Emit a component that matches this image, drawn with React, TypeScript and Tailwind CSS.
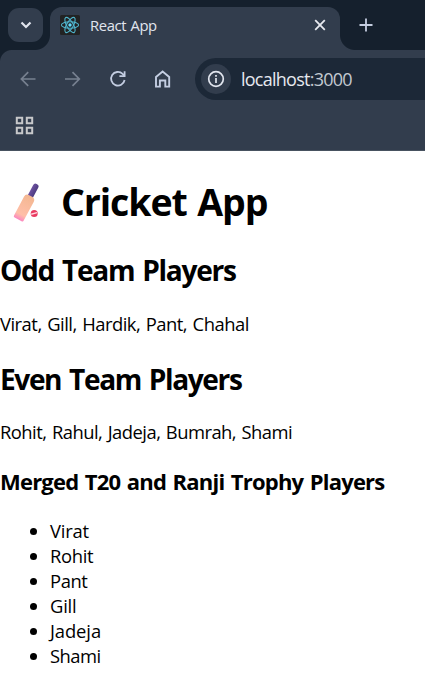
const listPlayers = [
  { name: "Virat", tracking: "tracking-[-0.2px]" },
  { name: "Rohit", tracking: "tracking-[-0.35px]" },
  { name: "Pant", tracking: "tracking-[-0.4px]" },
  { name: "Gill", tracking: "tracking-[-0.2px]" },
  { name: "Jadeja", tracking: "tracking-[-0.1px]" },
  { name: "Shami", tracking: "tracking-[-0.5px]" },
];

function ReactLogo() {
  return (
    <svg width="20" height="20" viewBox="0 0 20 20" className="shrink-0">
      <rect width="20" height="20" rx="1.5" fill="#222323" />
      <g fill="none" stroke="#4fb5cc" strokeWidth="1.1">
        <ellipse cx="10" cy="10" rx="8.6" ry="3.3" />
        <ellipse cx="10" cy="10" rx="8.6" ry="3.3" transform="rotate(60 10 10)" />
        <ellipse cx="10" cy="10" rx="8.6" ry="3.3" transform="rotate(120 10 10)" />
      </g>
      <circle cx="10" cy="10" r="1.7" fill="#61dafb" />
    </svg>
  );
}

function CricketBat() {
  return (
    <svg width="50" height="50" viewBox="0 0 50 50" className="shrink-0">
      <defs>
        <linearGradient id="blade" x1="0.5" y1="0" x2="0.5" y2="1">
          <stop offset="0" stopColor="#f3b791" />
          <stop offset="0.78" stopColor="#ffbfa8" />
          <stop offset="1" stopColor="#fb86c0" />
        </linearGradient>
        <linearGradient id="handle" x1="0" y1="0" x2="1" y2="0">
          <stop offset="0" stopColor="#6d51a0" />
          <stop offset="1" stopColor="#4d3c80" />
        </linearGradient>
      </defs>
      <g transform="translate(0 1) rotate(28 27.6 23.6)">
        <rect x="24.7" y="3.8" width="5.8" height="17" rx="2.7" fill="url(#handle)" />
        <path d="M22.1 21Q22.1 17.6 25.4 17.2H29.8Q33.1 17.6 33.1 21V42.2Q33.1 43.8 31.5 43.8H23.7Q22.1 43.8 22.1 42.2Z" fill="url(#blade)" />
      </g>
      <circle cx="34.2" cy="36.6" r="3.5" fill="#e93b61" />
      <path d="M31.2 37.3L37 35.6" stroke="#ffd7df" strokeWidth="1.5" />
    </svg>
  );
}

export default function App() {
  return (
    <div className="h-[683px] w-[425px] overflow-hidden bg-white font-['Open_Sans','Noto_Sans',sans-serif] whitespace-nowrap text-black">
      <header className="h-[151px] border-b border-[#485260] bg-[#323d4d]">
        <div className="relative flex h-[50px] bg-[#15202d]">
          <div className="mt-2 ml-2 flex h-[34px] w-[35px] items-center justify-center rounded-[11px] bg-[#323d4d]">
            <svg width="12" height="8" viewBox="0 0 12 8" fill="none" stroke="#e1e5ee" strokeWidth="2.2">
              <path d="M1.5 1.5L6 6L10.5 1.5" />
            </svg>
          </div>
          <div className="relative mt-[7px] ml-[7px] flex h-[43px] w-[290px] items-center rounded-t-[12px] bg-[#323d4d] pr-[13px] pb-[7px] pl-[10px]">
            <span className="absolute bottom-0 -left-[15px] size-[15px] bg-[radial-gradient(circle_at_0_0,transparent_14.5px,#323d4d_15.5px)]" />
            <span className="absolute -right-[15px] bottom-0 size-[15px] bg-[radial-gradient(circle_at_100%_0,transparent_14.5px,#323d4d_15.5px)]" />
            <ReactLogo />
            <span className="ml-[10px] text-[14.8px] leading-5 tracking-[-0.4px] [word-spacing:1px] text-[#e1e5ee]">React App</span>
            <svg className="ml-auto" width="14" height="14" viewBox="0 0 14 14" fill="none" stroke="#e8eaf0" strokeWidth="1.8">
              <path d="M2.2 2.2L11.8 11.8M11.8 2.2L2.2 11.8" />
            </svg>
          </div>
          <svg className="mt-[18px] ml-[19px]" width="14" height="14" viewBox="0 0 14 14" fill="none" stroke="#c4cde0" strokeWidth="1.8">
            <path d="M7 0.5V13.5M0.5 7H13.5" />
          </svg>
        </div>
        <div className="flex h-[58px] items-center bg-[radial-gradient(circle_at_12px_12px,#323d4d_11.5px,#15202d_12.5px)] bg-[length:12px_12px] bg-no-repeat">
          <svg className="ml-5" width="16" height="16" viewBox="0 0 16 16" fill="none" stroke="#778190" strokeWidth="1.7">
            <path d="M15.5 8H1.5M8.2 1.2L1.4 8L8.2 14.8" />
          </svg>
          <svg className="ml-[29px]" width="16" height="16" viewBox="0 0 16 16" fill="none" stroke="#778190" strokeWidth="1.7">
            <path d="M0 8H14.2M7.5 1.2L14.3 8L7.5 14.8" />
          </svg>
          <svg className="ml-[28px]" width="18" height="18" viewBox="0 0 18 18" fill="none" stroke="#c4cee2" strokeWidth="1.8">
            <path d="M15.6 10A6.8 6.8 0 1 1 13.6 3.8L15.6 5.8" />
            <path d="M15.6 1.2V6.2H10.4" />
          </svg>
          <svg className="ml-[27px]" width="18" height="20" viewBox="0 0 18 20" fill="none" stroke="#c4cee2" strokeWidth="1.9">
            <path d="M2 8L8.6 2.6L15.2 8V17.6H11.3V11.5H5.9V17.6H2Z" />
          </svg>
          <div className="ml-[23px] flex h-[42px] flex-1 items-center rounded-l-full bg-[#1c2837] pl-[6px]">
            <div className="flex size-[30px] items-center justify-center rounded-full bg-[#323d4d]">
              <svg width="18" height="18" viewBox="0 0 18 18" fill="none" stroke="#e1e5ee" strokeWidth="1.7">
                <circle cx="9" cy="9" r="7.3" />
                <path d="M9 8V13M9 5V6.8" />
              </svg>
            </div>
            <span className="ml-[10px] text-[18px] leading-6 tracking-[-0.75px] text-[#e6e9ef]">
              localhost<span className="text-[#c3c8d0]">:3000</span>
            </span>
          </div>
        </div>
        <svg className="mt-2 ml-[15px]" width="20" height="20" viewBox="0 0 20 20" fill="none" stroke="#c7c8ca" strokeWidth="2">
          <path d="M1.8 1.8H7.2V7.2H1.8ZM11.8 1.8H17.2V7.2H11.8ZM1.8 11.8H7.2V17.2H1.8ZM11.8 11.8H17.2V17.2H11.8Z" />
        </svg>
      </header>
      <main>
        <h1 className="mt-[26px] flex h-[50px] items-center text-[37.5px] leading-[50px] font-bold tracking-[-1.1px] [word-spacing:2px]">
          <CricketBat />
          <span className="ml-[11px]">Cricket App</span>
        </h1>
        <h2 className="mt-[24px] text-[28.1px] leading-[38px] font-bold tracking-[-1.3px] [word-spacing:2px]">Odd Team Players</h2>
        <p className="mt-[22px] text-[18.4px] leading-[25px] tracking-[-0.5px] [word-spacing:1.2px]">Virat, Gill, Hardik, Pant, Chahal</p>
        <h2 className="mt-[24px] text-[28.1px] leading-[38px] font-bold tracking-[-1.4px] [word-spacing:2px]">Even Team Players</h2>
        <p className="mt-[21px] text-[18.4px] leading-[25px] tracking-[-0.53px] [word-spacing:1.2px]">Rohit, Rahul, Jadeja, Bumrah, Shami</p>
        <h3 className="mt-[22px] text-[22px] leading-[30px] font-bold tracking-[-0.8px] [word-spacing:1.6px]">Merged T20 and Ranji Trophy Players</h3>
        <ul className="mt-[22px] text-[18.4px] leading-[25px]">
          {listPlayers.map((player) => (
            <li key={player.name} className="flex h-[25px] items-center pl-[30px]">
              <span className="mt-[2px] mr-[13px] size-[7px] rounded-full bg-black" />
              <span className={player.tracking}>{player.name}</span>
            </li>
          ))}
        </ul>
      </main>
    </div>
  );
}
